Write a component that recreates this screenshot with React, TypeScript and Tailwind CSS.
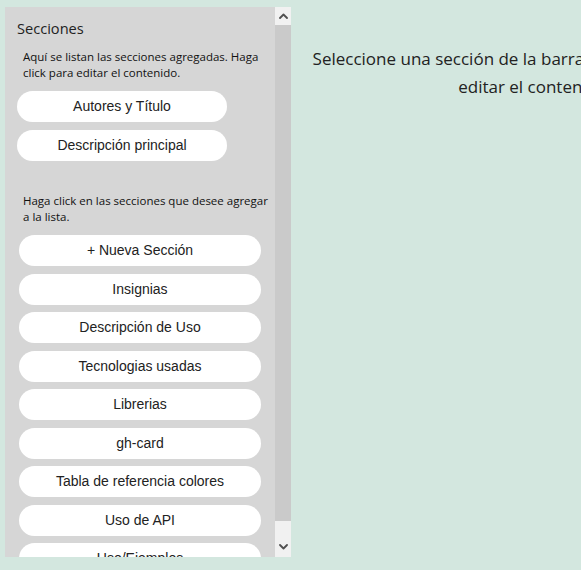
import React from "react";

const added = ["Autores y Título", "Descripción principal"];
const available = [
  "+ Nueva Sección",
  "Insignias",
  "Descripción de Uso",
  "Tecnologias usadas",
  "Librerias",
  "gh-card",
  "Tabla de referencia colores",
  "Uso de API",
  "Uso/Ejemplos",
  "Variables de Entorno",
];

function Chevron({ up }: { up?: boolean }) {
  return (
    <svg width="9" height="6" viewBox="0 0 9 6" fill="none">
      <polyline
        points={up ? "1,5 4.5,1.5 8,5" : "1,1 4.5,4.5 8,1"}
        stroke="#505050"
        strokeWidth="1.8"
        strokeLinecap="round"
        strokeLinejoin="round"
      />
    </svg>
  );
}

export default function App() {
  return (
    <div className="w-full h-[570px] overflow-hidden bg-[#d3e7df] flex items-start">
      <div className="ml-[5px] mt-[7px] h-[550px] w-[286px] shrink-0 flex">
        <div className="w-[270px] h-full overflow-hidden bg-[#d6d6d6]">
          <h2 className="pl-[12px] pt-[11px] text-[14.6px] leading-[20px] text-[#222] font-['Open_Sans',sans-serif]">
            Secciones
          </h2>
          <p className="mt-[11px] pl-[18px] pr-[6px] text-[11.5px] leading-[16px] text-[#111] font-['Open_Sans',sans-serif]">
            Aquí se listan las secciones agregadas. Haga click para editar el contenido.
          </p>
          <div className="mt-[10px] pl-[12px] flex flex-col gap-[7.5px]">
            {added.map((s) => (
              <button
                key={s}
                className="w-[210px] h-[31px] rounded-full bg-white text-[14px] text-[#222] font-['Liberation_Sans',Arial,sans-serif]"
              >
                {s}
              </button>
            ))}
          </div>
          <p className="mt-[32.5px] pl-[18px] pr-[2px] text-[11.5px] leading-[16px] text-[#111] font-['Open_Sans',sans-serif]">
            Haga click en las secciones que desee agregar a la lista.
          </p>
          <div className="mt-[10px] pl-[14px] flex flex-col gap-[7.5px]">
            {available.map((s) => (
              <button
                key={s}
                className="w-[242px] h-[31px] shrink-0 rounded-full bg-white text-[14px] text-[#222] font-['Liberation_Sans',Arial,sans-serif]"
              >
                {s}
              </button>
            ))}
          </div>
        </div>
        <div className="w-[16px] h-full flex flex-col bg-[#f1f1f1]">
          <div className="h-[18px] flex items-center justify-center">
            <Chevron up />
          </div>
          <div className="h-[496px] bg-[#cacaca]" />
          <div className="flex-1 flex items-end justify-center pb-[7px]">
            <Chevron />
          </div>
        </div>
      </div>
      <div className="ml-[4px] w-[480px] shrink-0 pt-[45px] text-center text-[17px] leading-[28px] text-[#222] font-['Open_Sans',sans-serif]">
        <div className="whitespace-nowrap">Seleccione una sección de la barra lateral izquierda para</div>
        <div className="whitespace-nowrap">editar el contenido.</div>
      </div>
    </div>
  );
}
